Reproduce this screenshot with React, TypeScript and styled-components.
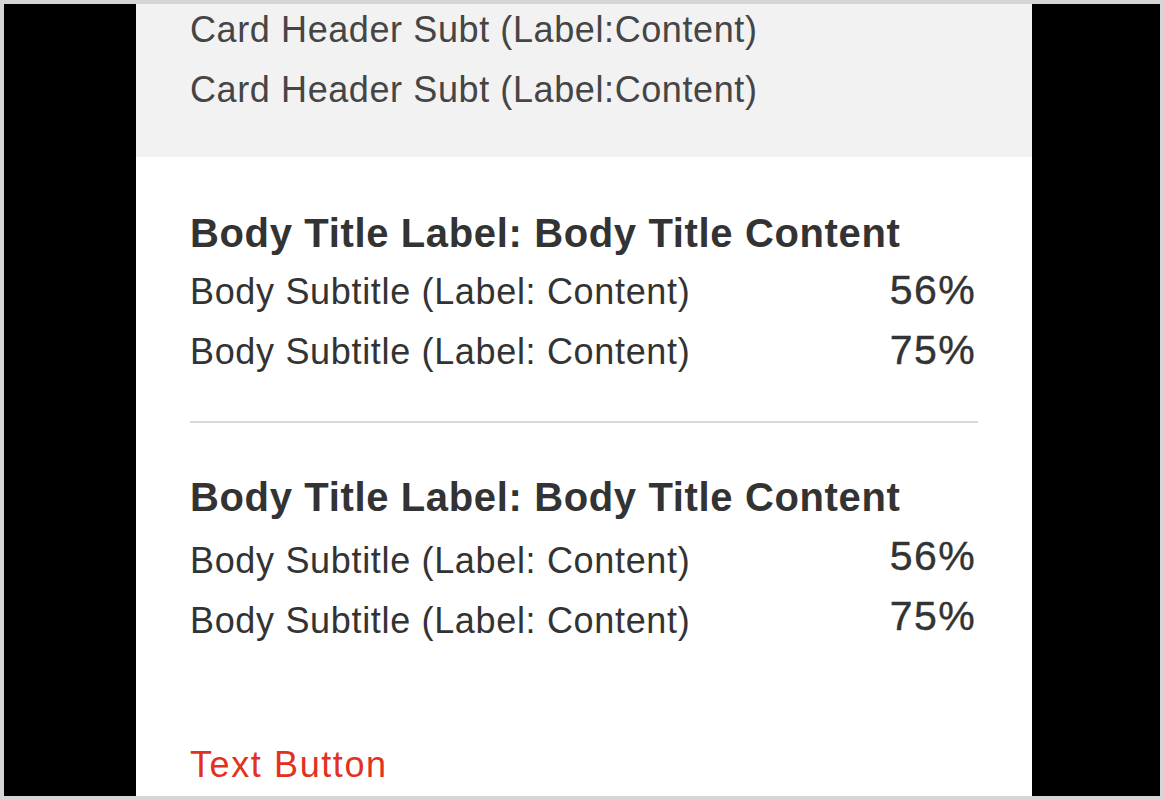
import React from "react";
import styled, { createGlobalStyle } from "styled-components";

const GlobalStyle = createGlobalStyle`
  html, body {
    margin: 0;
    padding: 0;
    background: #d6d6d6;
  }
  * {
    box-sizing: border-box;
  }
`;

const Frame = styled.div`
  width: 1164px;
  height: 800px;
  padding: 4px;
  background: #d6d6d6;
  font-family: "Liberation Sans", Arial, Helvetica, sans-serif;
`;

const Stage = styled.div`
  height: 100%;
  background: #000;
  display: flex;
  justify-content: center;
  padding-left: 4px;
  overflow: hidden;
`;

const Card = styled.div`
  width: 896px;
  height: 100%;
  background: #fff;
  display: flex;
  flex-direction: column;
  overflow: hidden;
`;

const Header = styled.div`
  background: #f2f2f2;
  padding: 0 54px 41px;
  display: flex;
  flex-direction: column;
  gap: 8px;
`;

const HeaderSub = styled.div`
  font-size: 36px;
  line-height: 52px;
  color: #454545;
  letter-spacing: 0.6px;
`;

const Body = styled.div`
  padding: 52px 54px 0;
  display: flex;
  flex-direction: column;
`;

const Group = styled.div<{ $gap: number }>`
  display: flex;
  flex-direction: column;
  gap: ${(p) => p.$gap}px;
`;

const Title = styled.div`
  font-size: 40px;
  line-height: 48px;
  font-weight: 700;
  color: #333;
  letter-spacing: 0.64px;
`;

const Rows = styled.div`
  display: flex;
  flex-direction: column;
`;

const Row = styled.div<{ $align: "baseline" | "flex-start" }>`
  display: flex;
  justify-content: space-between;
  align-items: ${(p) => p.$align};
`;

const Subtitle = styled.span`
  font-size: 36px;
  line-height: 60px;
  color: #333;
  letter-spacing: 0.67px;
`;

const Percent = styled.span`
  font-size: 41px;
  line-height: 50px;
  color: #333;
  letter-spacing: 1.4px;
  margin-right: 2px;
  -webkit-text-stroke: 0.4px #333;
`;

const Divider = styled.hr`
  margin: 39px 0 50px;
  border: none;
  height: 2px;
  background: #d9d9d9;
`;

const TextButton = styled.button`
  align-self: flex-start;
  margin-top: 84px;
  padding: 0;
  border: none;
  background: none;
  font-family: inherit;
  font-size: 36px;
  line-height: 60px;
  color: #e2311d;
  letter-spacing: 1.6px;
  cursor: pointer;
`;

type Item = { label: string; value: string };

const items: Item[] = [
  { label: "Body Subtitle (Label: Content)", value: "56%" },
  { label: "Body Subtitle (Label: Content)", value: "75%" },
];

function BodyGroup({ align, gap }: { align: "baseline" | "flex-start"; gap: number }) {
  return (
    <Group $gap={gap}>
      <Title>Body Title Label: Body Title Content</Title>
      <Rows>
        {items.map((it, i) => (
          <Row key={i} $align={align}>
            <Subtitle>{it.label}</Subtitle>
            <Percent>{it.value}</Percent>
          </Row>
        ))}
      </Rows>
    </Group>
  );
}

export default function App() {
  return (
    <>
      <GlobalStyle />
      <Frame>
        <Stage>
          <Card>
            <Header>
              <HeaderSub>Card Header Subt (Label:Content)</HeaderSub>
              <HeaderSub>Card Header Subt (Label:Content)</HeaderSub>
            </Header>
            <Body>
              <BodyGroup align="baseline" gap={5} />
              <Divider />
              <BodyGroup align="flex-start" gap={10} />
              <TextButton>Text Button</TextButton>
            </Body>
          </Card>
        </Stage>
      </Frame>
    </>
  );
}
